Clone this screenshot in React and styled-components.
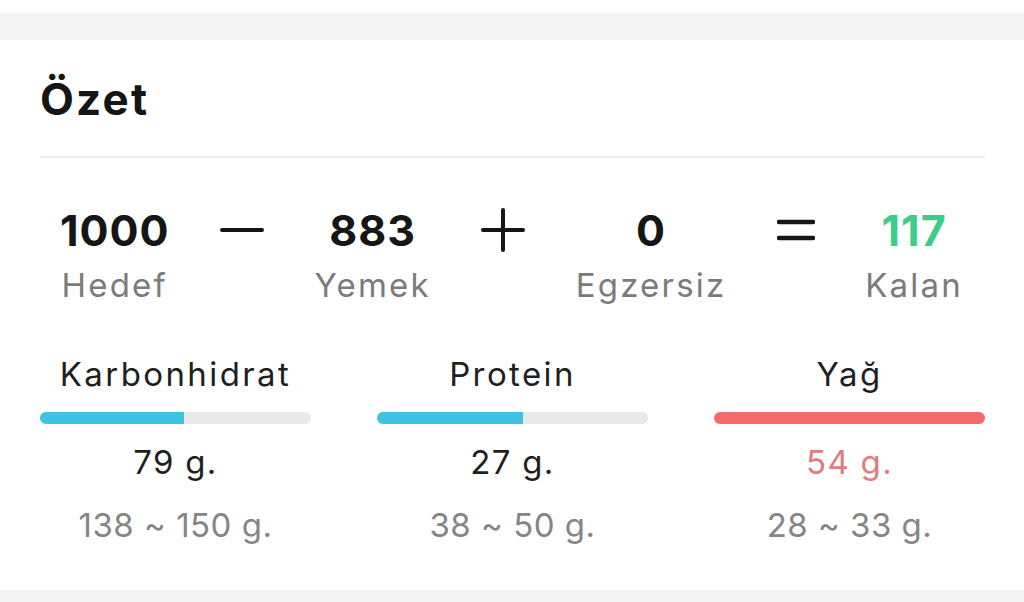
import React from "react";
import styled, { createGlobalStyle } from "styled-components";

const GlobalStyle = createGlobalStyle`
  html, body { margin: 0; padding: 0; background: #ffffff; }
  body { font-family: "Inter", "Noto Sans", sans-serif; -webkit-font-smoothing: antialiased; }
  * { box-sizing: border-box; }
`;

const Page = styled.div`
  width: 1024px;
  height: 602px;
  overflow: hidden;
  display: flex;
  flex-direction: column;
  background: #ffffff;
  padding-top: 13px;
`;

const Band = styled.div`
  height: ${(p) => p.$h}px;
  flex: none;
  background: #f4f4f4;
`;

const Card = styled.section`
  height: 550px;
  flex: none;
  background: #ffffff;
  padding: 33px 39px 0 40px;
  display: flex;
  flex-direction: column;
`;

const Title = styled.h2`
  margin: 0;
  font-size: 44px;
  line-height: 52px;
  font-weight: 700;
  color: #151515;
  letter-spacing: 2.2px;
`;

const Divider = styled.hr`
  margin: 31px 0 0;
  border: none;
  height: 2px;
  background: #ebebeb;
`;

const SummaryRow = styled.div`
  margin-top: 47px;
  padding: 0 22px 0 20px;
  display: flex;
  justify-content: space-between;
  align-items: flex-start;
`;

const Stat = styled.div`
  display: flex;
  flex-direction: column;
  align-items: center;
`;

const StatValue = styled.div`
  font-size: 43px;
  line-height: 50px;
  font-weight: 700;
  color: ${(p) => (p.$accent ? "#3ecb8c" : "#161616")};
  letter-spacing: 1px;
`;

const StatLabel = styled.div`
  margin-top: 10px;
  font-size: 33px;
  line-height: 40px;
  font-weight: 400;
  color: #7b7b7b;
  letter-spacing: 2.2px;
`;

const Operator = styled.div`
  height: 50px;
  display: flex;
  align-items: center;
  justify-content: center;
  color: #151515;
`;

const MacroGrid = styled.div`
  margin-top: 49px;
  display: grid;
  grid-template-columns: repeat(3, 1fr);
  column-gap: 66px;
`;

const Macro = styled.div`
  display: flex;
  flex-direction: column;
  align-items: center;
`;

const MacroName = styled.div`
  font-size: 33px;
  line-height: 40px;
  color: #1f1f1f;
  letter-spacing: 2.4px;
`;

const Track = styled.div`
  margin-top: 18px;
  width: 100%;
  height: 12px;
  border-radius: 6px;
  background: #e9e9e9;
  overflow: hidden;
  display: flex;
`;

const Fill = styled.div`
  height: 100%;
  background: ${(p) => p.$color};
`;

const MacroValue = styled.div`
  margin-top: 18px;
  font-size: 33px;
  line-height: 40px;
  color: ${(p) => (p.$over ? "#e07b80" : "#1f1f1f")};
  letter-spacing: 1.3px;
`;

const MacroRange = styled.div`
  margin-top: 23px;
  font-size: 33px;
  line-height: 40px;
  color: #858585;
  letter-spacing: 0.5px;
`;

const Minus = () => (
  <svg width="44" height="8" viewBox="0 0 44 8">
    <line x1="2" y1="4" x2="42" y2="4" stroke="currentColor" strokeWidth="4" strokeLinecap="round" />
  </svg>
);

const Plus = () => (
  <svg width="44" height="44" viewBox="0 0 44 44">
    <line x1="2" y1="22" x2="42" y2="22" stroke="currentColor" strokeWidth="4" strokeLinecap="round" />
    <line x1="22" y1="2" x2="22" y2="42" stroke="currentColor" strokeWidth="4" strokeLinecap="round" />
  </svg>
);

const Equals = () => (
  <svg width="38" height="22" viewBox="0 0 38 22">
    <line x1="2" y1="3" x2="36" y2="3" stroke="currentColor" strokeWidth="4.5" strokeLinecap="round" />
    <line x1="2" y1="19" x2="36" y2="19" stroke="currentColor" strokeWidth="4.5" strokeLinecap="round" />
  </svg>
);

const macros = [
  { name: "Karbonhidrat", pct: 53, color: "#3fc2e1", value: "79 g.", range: "138 ~ 150 g." },
  { name: "Protein", pct: 54, color: "#3fc2e1", value: "27 g.", range: "38 ~ 50 g." },
  { name: "Yağ", pct: 100, color: "#f36a69", value: "54 g.", range: "28 ~ 33 g.", over: true },
];

export default function App() {
  return (
    <>
      <GlobalStyle />
      <Page>
        <Band $h={27} />
        <Card>
          <Title>Özet</Title>
          <Divider />
          <SummaryRow>
            <Stat>
              <StatValue>1000</StatValue>
              <StatLabel>Hedef</StatLabel>
            </Stat>
            <Operator><Minus /></Operator>
            <Stat>
              <StatValue>883</StatValue>
              <StatLabel>Yemek</StatLabel>
            </Stat>
            <Operator><Plus /></Operator>
            <Stat>
              <StatValue>0</StatValue>
              <StatLabel>Egzersiz</StatLabel>
            </Stat>
            <Operator><Equals /></Operator>
            <Stat>
              <StatValue $accent>117</StatValue>
              <StatLabel>Kalan</StatLabel>
            </Stat>
          </SummaryRow>
          <MacroGrid>
            {macros.map((m) => (
              <Macro key={m.name}>
                <MacroName>{m.name}</MacroName>
                <Track>
                  <Fill $color={m.color} style={{ width: `${m.pct}%` }} />
                </Track>
                <MacroValue $over={m.over}>{m.value}</MacroValue>
                <MacroRange>{m.range}</MacroRange>
              </Macro>
            ))}
          </MacroGrid>
        </Card>
        <Band $h={12} />
      </Page>
    </>
  );
}
